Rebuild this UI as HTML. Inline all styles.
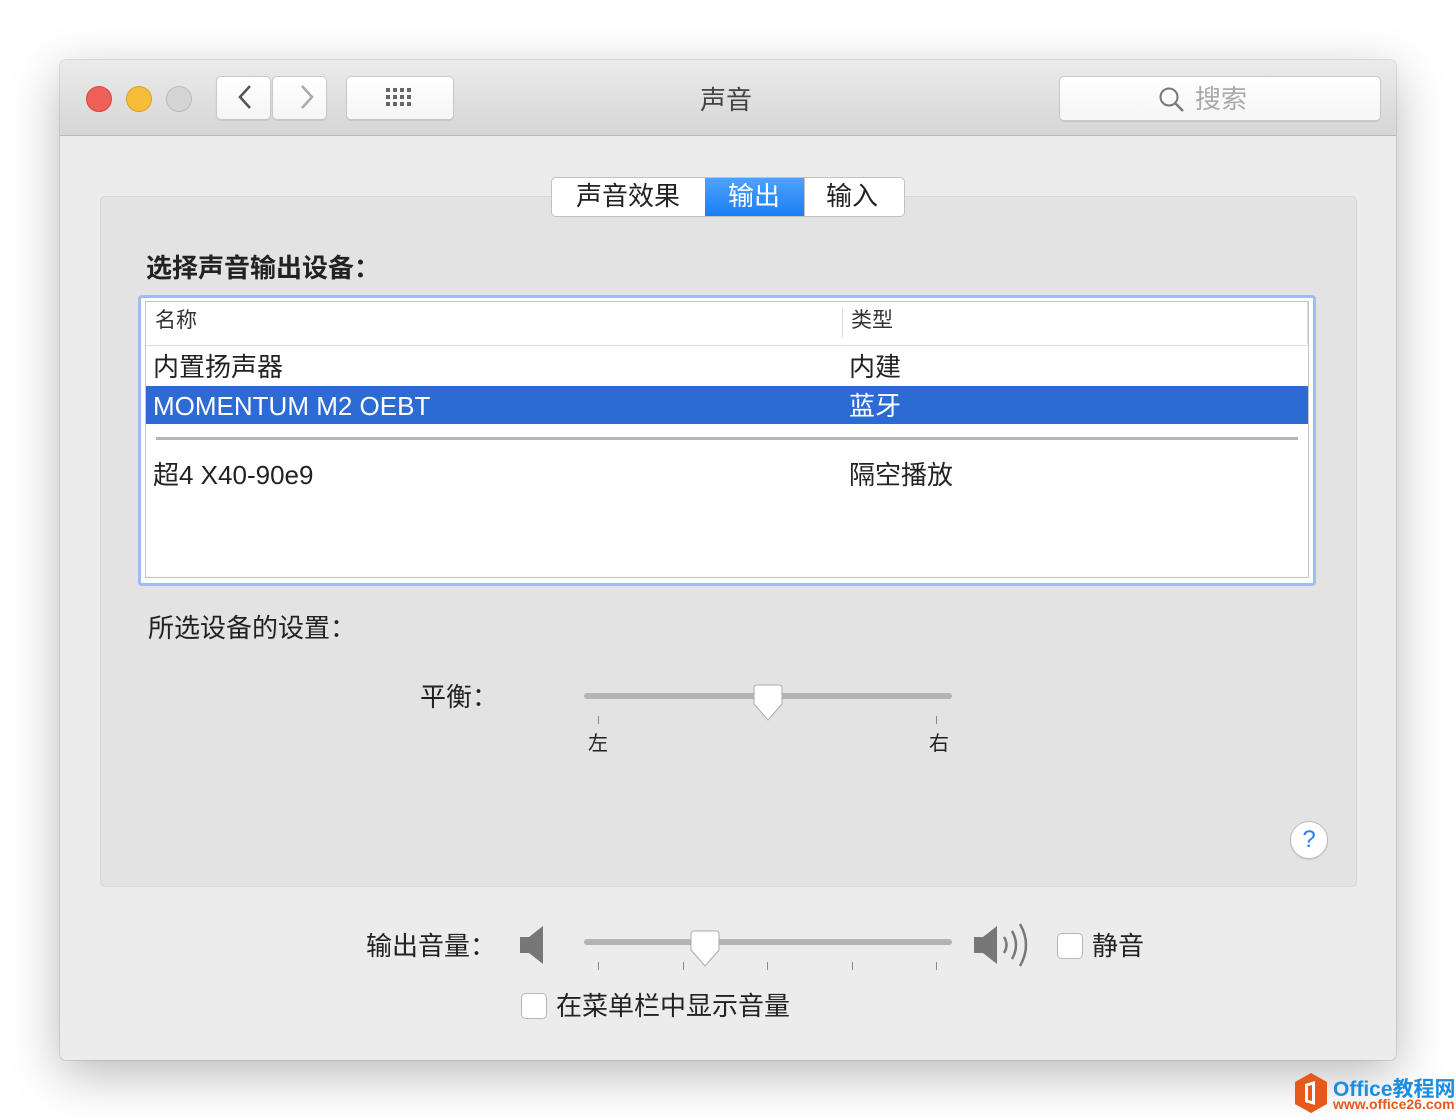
<!DOCTYPE html>
<html><head><meta charset="utf-8"><style>
body{margin:0;width:1456px;height:1120px;background:#fff;font-family:"Liberation Sans","Noto Sans CJK SC",sans-serif;position:relative;overflow:hidden;color:#222}
.a{position:absolute}
.win{left:60px;top:60px;width:1336px;height:1000px;background:#ececec;border-radius:6px;box-shadow:0 14px 50px rgba(0,0,0,.28),0 0 0 1px rgba(0,0,0,.1)}
.tb{left:0;top:0;width:1336px;height:75px;background:linear-gradient(#ebebeb,#d6d6d6);border-bottom:1px solid #b8b8b8;border-radius:6px 6px 0 0}
.dot{width:24px;height:24px;border-radius:50%;top:26px}
.btn{background:linear-gradient(#fff,#f5f5f5);border:1px solid #c8c8c8;border-radius:5px;box-shadow:0 1px 1px rgba(0,0,0,.1)}
.t{font-size:26px;line-height:30px;white-space:nowrap}
.s{font-size:21px;line-height:24px;white-space:nowrap}
.cb{width:24px;height:24px;border:1px solid #b5b5b5;border-radius:5px;background:#fff}
</style></head><body>
<div class="a win">
 <div class="a tb">
  <div class="a dot" style="left:26px;background:#ee5f57;border:1px solid #d9463e"></div>
  <div class="a dot" style="left:66px;background:#f6bd3b;border:1px solid #dea123"></div>
  <div class="a dot" style="left:106px;background:#d4d4d4;border:1px solid #bcbcbc"></div>
  <div class="a btn" style="left:156px;top:16px;width:53px;height:42px"></div>
  <div class="a btn" style="left:212px;top:16px;width:53px;height:42px"></div>
  <svg class="a" style="left:170px;top:22px" width="90" height="30"><path d="M20 4 L10 15 L20 26" stroke="#555" stroke-width="2.5" fill="none"/><path d="M72 4 L82 15 L72 26" stroke="#aaa" stroke-width="2.5" fill="none"/></svg>
  <div class="a btn" style="left:286px;top:16px;width:106px;height:42px"></div>
  <svg class="a" style="left:326px;top:28px" width="30" height="22"><g fill="#666"><rect x="0" y="0" width="4" height="4"/><rect x="7" y="0" width="4" height="4"/><rect x="14" y="0" width="4" height="4"/><rect x="21" y="0" width="4" height="4"/><rect x="0" y="7" width="4" height="4"/><rect x="7" y="7" width="4" height="4"/><rect x="14" y="7" width="4" height="4"/><rect x="21" y="7" width="4" height="4"/><rect x="0" y="14" width="4" height="4"/><rect x="7" y="14" width="4" height="4"/><rect x="14" y="14" width="4" height="4"/><rect x="21" y="14" width="4" height="4"/></g></svg>
  <div class="a t" style="left:640px;top:25px;color:#444">声音</div>
  <div class="a btn" style="left:999px;top:16px;width:320px;height:43px"></div>
  <svg class="a" style="left:1098px;top:26px" width="28" height="28"><circle cx="11" cy="11" r="8.5" stroke="#777" stroke-width="2" fill="none"/><path d="M17 17 L25 25" stroke="#777" stroke-width="2.5"/></svg>
  <div class="a t" style="left:1135px;top:24px;color:#aaa">搜索</div>
 </div>
 <div class="a" style="left:40px;top:136px;width:1255px;height:689px;background:#e3e3e3;border:1px solid #d6d6d6;border-radius:5px"></div>
 <div class="a" style="left:491px;top:117px;width:352px;height:38px;background:#fff;border:1px solid #c2c2c2;border-radius:5px;overflow:hidden">
  <div class="a" style="left:153px;top:0;width:99px;height:38px;background:linear-gradient(#4ea2f9,#1b7ef4)"></div>
  <div class="a" style="left:252px;top:0;width:1px;height:38px;background:#c2c2c2"></div>
  <div class="a t" style="left:24px;top:3px">声音效果</div>
  <div class="a t" style="left:176px;top:3px;color:#fff">输出</div>
  <div class="a t" style="left:274px;top:3px">输入</div>
 </div>
 <div class="a t" style="left:86px;top:193px;font-weight:bold">选择声音输出设备：</div>
 <div class="a" style="left:78px;top:235px;width:1172px;height:285px;border:3px solid #9ebef0;border-radius:4px;background:#fff">
  <div class="a" style="left:4px;top:3px;width:1162px;height:275px;border:1px solid #c5c5c5;background:#fff"></div>
  <div class="a" style="left:5px;top:47px;width:1162px;height:1px;background:#ddd"></div>
  <div class="a" style="left:701px;top:10px;width:1px;height:30px;background:#ddd"></div>
  <div class="a" style="left:1166px;top:4px;width:1px;height:42px;background:#ddd"></div>
  <div class="a s" style="left:14px;top:11px;color:#333">名称</div>
  <div class="a s" style="left:710px;top:11px;color:#333">类型</div>
  <div class="a t" style="left:12px;top:54px">内置扬声器</div>
  <div class="a t" style="left:708px;top:54px">内建</div>
  <div class="a" style="left:5px;top:88px;width:1162px;height:38px;background:#2c6bd3"></div>
  <div class="a t" style="left:12px;top:93px;color:#fff">MOMENTUM M2 OEBT</div>
  <div class="a t" style="left:708px;top:93px;color:#fff">蓝牙</div>
  <div class="a" style="left:15px;top:139px;width:1142px;height:3px;background:#b5b5b5"></div>
  <div class="a t" style="left:12px;top:162px">超4 X40-90e9</div>
  <div class="a t" style="left:708px;top:162px">隔空播放</div>
 </div>
 <div class="a t" style="left:88px;top:553px">所选设备的设置：</div>
 <div class="a t" style="left:360px;top:622px">平衡：</div>
 <div class="a" style="left:524px;top:633px;width:368px;height:6px;border-radius:3px;background:#b4b4b4"></div>
 <div class="a" style="left:538px;top:656px;width:1px;height:8px;background:#888"></div>
 <div class="a" style="left:876px;top:656px;width:1px;height:8px;background:#888"></div>
 <svg class="a" style="left:691px;top:624px" width="34" height="40"><path d="M3 4 Q3 1 6 1 H28 Q31 1 31 4 V20 L17 36 L3 20 Z" fill="#fff" stroke="#aaa" stroke-width="1"/></svg>
 <div class="a" style="left:528px;top:672px;font-size:20px;line-height:24px">左</div>
 <div class="a" style="left:869px;top:672px;font-size:20px;line-height:24px">右</div>
 <div class="a" style="left:1230px;top:761px;width:36px;height:36px;border-radius:50%;background:#fff;border:1px solid #bbb;box-shadow:0 1px 1px rgba(0,0,0,.1);text-align:center;line-height:36px;font-size:24px;color:#2f7cf0">?</div>
 <div class="a t" style="left:306px;top:871px">输出音量：</div>
 <svg class="a" style="left:458px;top:864px" width="30" height="42"><path d="M2 13 H11 L25 2 V40 L11 29 H2 Z" fill="#777"/></svg>
 <div class="a" style="left:524px;top:879px;width:368px;height:6px;border-radius:3px;background:#b4b4b4"></div>
 <div class="a" style="left:538px;top:902px;width:1px;height:8px;background:#888"></div>
 <div class="a" style="left:623px;top:902px;width:1px;height:8px;background:#888"></div>
 <div class="a" style="left:707px;top:902px;width:1px;height:8px;background:#888"></div>
 <div class="a" style="left:792px;top:902px;width:1px;height:8px;background:#888"></div>
 <div class="a" style="left:876px;top:902px;width:1px;height:8px;background:#888"></div>
 <svg class="a" style="left:628px;top:870px" width="34" height="40"><path d="M3 4 Q3 1 6 1 H28 Q31 1 31 4 V20 L17 36 L3 20 Z" fill="#fff" stroke="#aaa" stroke-width="1"/></svg>
 <svg class="a" style="left:912px;top:860px" width="70" height="52"><path d="M2 17 H11 L25 6 V44 L11 33 H2 Z" fill="#777"/><path d="M32 17 Q37 25 32 33" stroke="#777" stroke-width="2.5" fill="none"/><path d="M40 11 Q48 25 40 39" stroke="#777" stroke-width="2.5" fill="none"/><path d="M48 4 Q60 25 48 46" stroke="#777" stroke-width="2.5" fill="none"/></svg>
 <div class="a cb" style="left:997px;top:873px"></div>
 <div class="a t" style="left:1032px;top:871px">静音</div>
 <div class="a cb" style="left:461px;top:933px"></div>
 <div class="a t" style="left:496px;top:931px">在菜单栏中显示音量</div>
</div>
<svg class="a" style="left:1293px;top:1072px" width="36" height="42"><path d="M18 1 L34 10 V32 L18 41 L2 32 V10 Z" fill="#e8581b"/><path d="M12 12 L22 9 V33 L12 30 Z M15 14 V28 L19 29 V13 Z" fill="#fff"/></svg>
<div class="a" style="left:1333px;top:1073px;font-size:21px;font-weight:bold;color:#1e8de0">Office教程网</div>
<div class="a" style="left:1333px;top:1096px;font-size:14px;font-weight:bold;color:#e8581b">www.office26.com</div>
</body></html>
